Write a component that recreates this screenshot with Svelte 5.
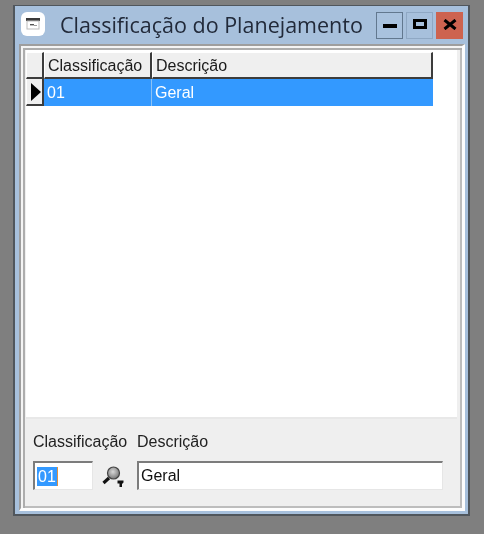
<script>
	let code = '01';
	let desc = 'Geral';
</script>

<div class="page">
	<div class="window">
		<div class="titlebar">
			<span class="appicon">
				<svg width="18" height="18" viewBox="0 0 18 18">
					<rect x="2" y="3" width="14" height="12" fill="#fff" />
					<rect x="2" y="3" width="14" height="3" fill="#3a3a3a" />
					<rect x="3" y="6" width="12" height="8" fill="none" stroke="#bbb" />
					<rect x="6" y="9" width="4" height="1.4" fill="#555" />
					<rect x="10" y="10" width="3" height="1" fill="#999" />
				</svg>
			</span>
			<span class="title">Classificação do Planejamento</span>
			<div class="buttons">
				<span class="btn active">
					<svg width="14" height="6" viewBox="0 0 14 6"><rect y="0" width="14" height="4" fill="#000" /></svg>
				</span>
				<span class="btn">
					<svg width="14" height="10" viewBox="0 0 14 10"><rect x="1.5" y="1.5" width="11" height="7" fill="none" stroke="#000" stroke-width="3" /></svg>
				</span>
				<span class="btn close">
					<svg width="14" height="11" viewBox="0 0 14 11"><path d="M1.5 1L12.5 10M12.5 1L1.5 10" stroke="#000" stroke-width="3" fill="none" /></svg>
				</span>
			</div>
		</div>

		<div class="frame">
			<div class="gridarea">
				<div class="grid">
					<div class="row head">
						<div class="cell ind"></div>
						<div class="cell c1">Classificação</div>
						<div class="cell c2">Descrição</div>
					</div>
					<div class="row sel">
						<div class="cell ind">
							<svg width="10" height="18" viewBox="0 0 10 18"><path d="M0 0L10 9L0 18Z" fill="#000" /></svg>
						</div>
						<div class="cell c1">{code}</div>
						<div class="cell c2">{desc}</div>
					</div>
				</div>
			</div>

			<div class="panel">
				<div class="labels">
					<span class="l1">Classificação</span>
					<span>Descrição</span>
				</div>
				<div class="fields">
					<div class="input small"><span class="hl">{code}</span></div>
					<span class="lookup">
						<svg width="22" height="22" viewBox="0 0 22 22">
							<defs>
								<radialGradient id="lens" cx="0.45" cy="0.4" r="0.6">
									<stop offset="0" stop-color="#d8d8d8" />
									<stop offset="1" stop-color="#777" />
								</radialGradient>
							</defs>
							<circle cx="11.5" cy="8" r="6" fill="url(#lens)" stroke="#444" stroke-width="1.2" />
							<path d="M7 13L1.5 18" stroke="#111" stroke-width="3.2" />
							<path d="M15.5 15.5H21.5V17.5L20 19V22H17.5V18.5H15.5Z" fill="#111" />
						</svg>
					</span>
					<div class="input wide">{desc}</div>
				</div>
			</div>
		</div>
	</div>
</div>

<style>
	:global(body) {
		margin: 0;
		background: #7f7f7f;
	}
	.page {
		width: 484px;
		height: 534px;
		padding: 5px 0 0 13px;
		box-sizing: border-box;
		font-family: "Liberation Sans", Arial, sans-serif;
		overflow: hidden;
	}
	.window {
		width: 457px;
		height: 511px;
		box-sizing: border-box;
		background: #a7c0dc;
		border-style: solid;
		border-color: #50565c;
		border-width: 1px 2px 2px 2px;
		padding: 0 3px 3px 4px;
		display: flex;
		flex-direction: column;
		filter: blur(0.45px);
	}
	.titlebar {
		height: 38px;
		flex: none;
		display: flex;
		align-items: center;
		padding-left: 2px;
		box-sizing: border-box;
	}
	.appicon {
		width: 24px;
		height: 24px;
		background: #fff;
		border-radius: 6px;
		display: flex;
		align-items: center;
		justify-content: center;
		margin-top: -3px;
	}
	.title {
		margin-left: 15px;
		font-family: "Open Sans", sans-serif;
		font-size: 21.5px;
		color: #222a3a;
		white-space: nowrap;
		margin-top: -1px;
	}
	.buttons {
		margin-left: auto;
		display: flex;
		gap: 3px;
		margin-right: 2px;
	}
	.btn {
		width: 27px;
		height: 27px;
		box-sizing: border-box;
		border: 1px solid #8fa8c4;
		display: flex;
		align-items: center;
		justify-content: center;
		padding-bottom: 3px;
	}
	.btn.active {
		background: #a9c2de;
		border: 1px solid #62788f;
		padding-bottom: 0;
		padding-top: 4px;
	}
	.btn.close {
		background: #cd6350;
		border-color: #cd6350;
		padding-bottom: 1px;
	}
	.frame {
		flex: 1;
		background: #efefef;
		border-style: solid;
		border-width: 2px 3px 3px 2px;
		border-color: #9e9e9e #fdfdfd #fdfdfd #9e9e9e;
		box-shadow: inset 2px 2px 0 #f4f4f4, inset 4px 4px 0 #adadad, inset -2px -2px 0 #bdbdbd;
		padding: 4px 2px 2px 4px;
		display: flex;
		flex-direction: column;
		min-height: 0;
	}
	.gridarea {
		height: 369px;
		flex: none;
		margin: 0 3px 0 1px;
		background: #fff;
		border-bottom: 2px solid #e8e8e8;
		padding-top: 2px;
		box-sizing: border-box;
	}
	.grid {
		width: 407px;
		font-size: 16px;
	}
	.row {
		display: flex;
		height: 27px;
		box-sizing: border-box;
	}
	.cell {
		display: flex;
		align-items: center;
		padding-left: 3px;
		box-sizing: border-box;
		white-space: nowrap;
	}
	.ind {
		width: 18px;
		padding-left: 4px;
		flex: none;
	}
	.c1 {
		width: 108px;
		flex: none;
	}
	.c2 {
		flex: 1;
	}
	.head .cell {
		background: #efefef;
		color: #1a1a1a;
		border-right: 2px solid #3c3c3c;
		border-bottom: 2px solid #3c3c3c;
		border-top: 1px solid #fff;
		border-left: 1px solid #fff;
		padding-top: 1px;
	}
	.sel .cell {
		background: #3399ff;
		color: #fff;
		border-right: 1px solid #8cc2f5;
	}
	.sel .c2 {
		border-right: none;
	}
	.sel .ind {
		background: #efefef;
		border-right: 2px solid #3c3c3c;
		border-bottom: 2px solid #3c3c3c;
		border-left: 1px solid #fff;
	}
	.panel {
		flex: 1;
		padding: 13px 0 0 8px;
		font-size: 16px;
		color: #222;
	}
	.labels {
		display: flex;
		height: 20px;
		align-items: center;
	}
	.l1 {
		width: 104px;
	}
	.fields {
		display: flex;
		align-items: center;
		margin-top: 9px;
	}
	.input {
		height: 29px;
		box-sizing: border-box;
		background: #fff;
		border: 1px solid #e6e6e6;
		border-top: 2px solid #7c7c7c;
		border-left: 2px solid #7c7c7c;
		display: flex;
		align-items: center;
		color: #111;
	}
	.small {
		width: 60px;
		padding-left: 2px;
	}
	.hl {
		background: #3399ff;
		color: #fff;
		padding: 0 1px;
		line-height: 19px;
		border-right: 1px solid #e09040;
	}
	.lookup {
		display: flex;
		margin: 0 13px 0 9px;
	}
	.wide {
		width: 306px;
		padding-left: 2px;
	}
</style>
